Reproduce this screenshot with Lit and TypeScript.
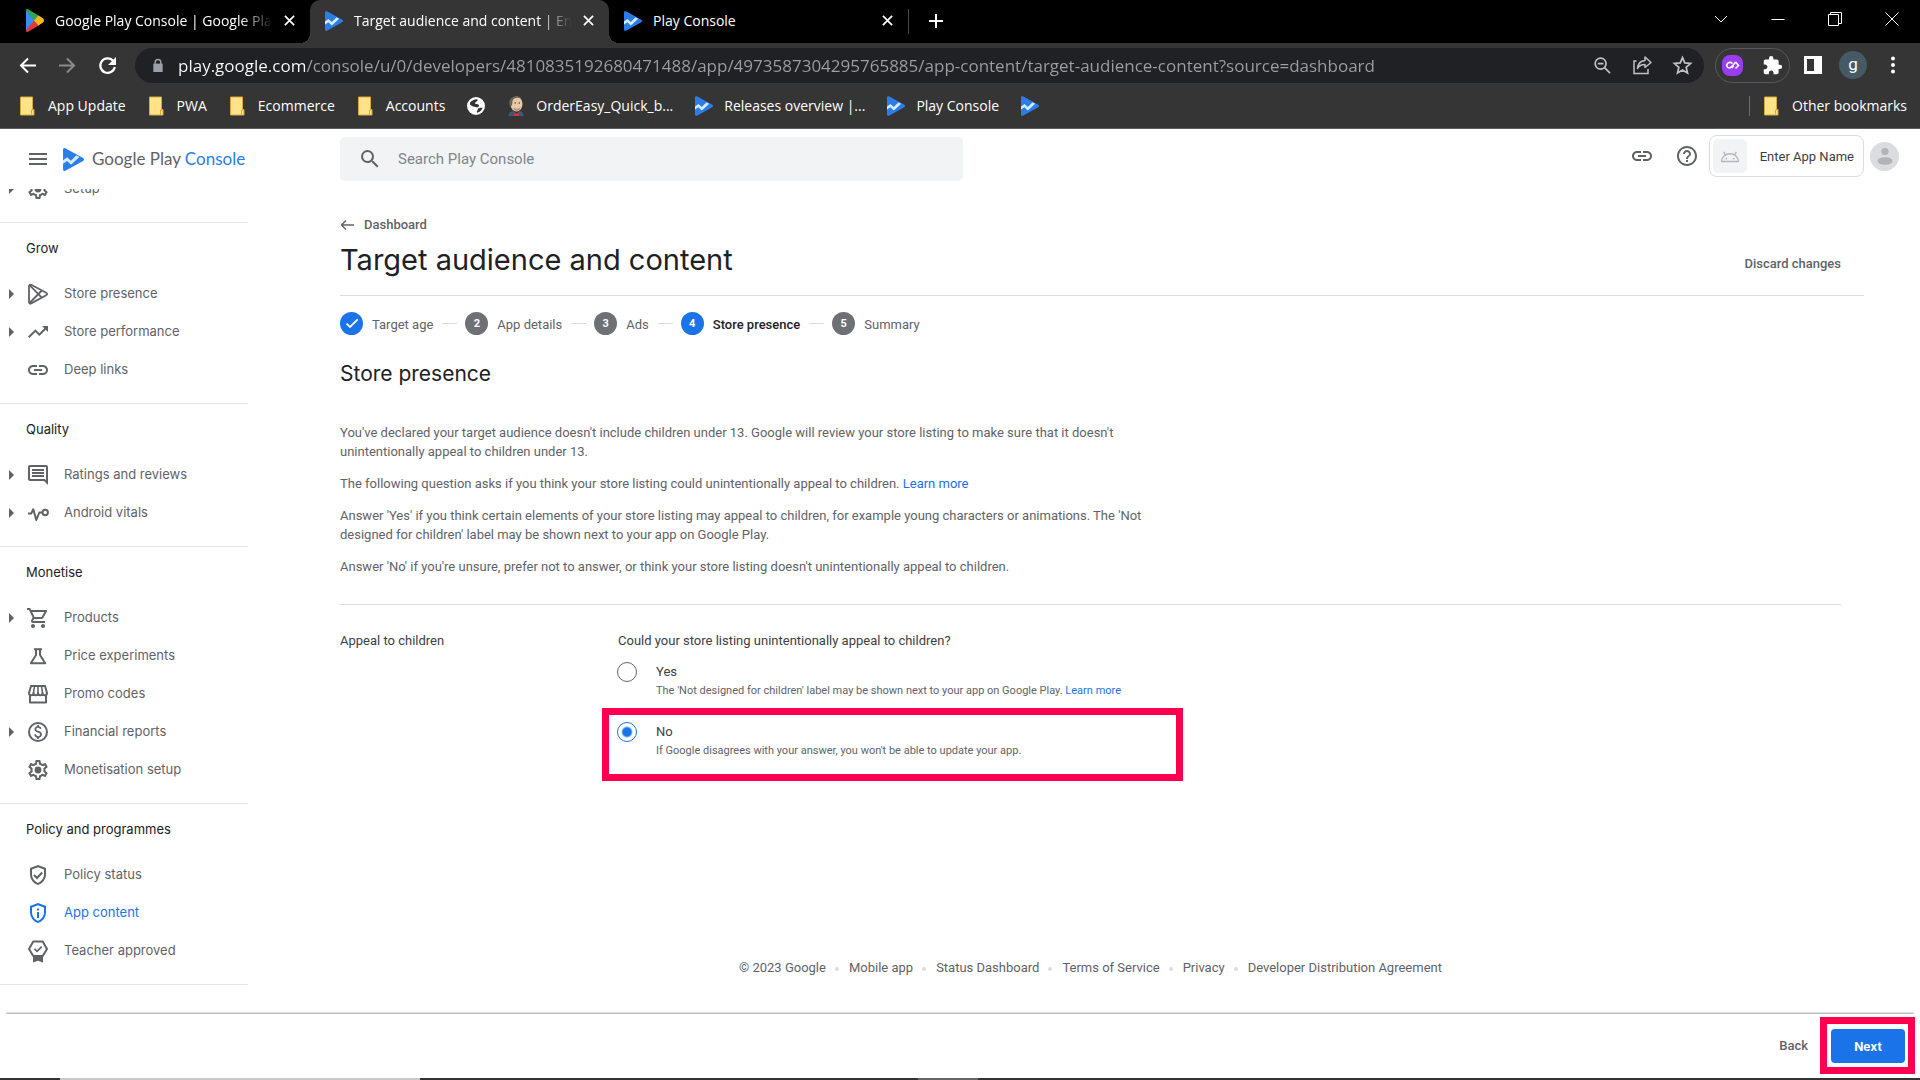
import { LitElement, html, css, svg, nothing } from "lit";
import type { TemplateResult, SVGTemplateResult } from "lit";
import { customElement, state } from "lit/decorators.js";
import { classMap } from "lit/directives/class-map.js";

/* ---------- icons ---------- */

const icon = (body: SVGTemplateResult, size = 24, box = "0 0 24 24"): TemplateResult =>
  html`<svg width=${size} height=${size} viewBox=${box} fill="currentColor" aria-hidden="true">${body}</svg>`;

const settingsPath =
  "M19.43 12.98c.04-.32.07-.64.07-.98 0-.34-.03-.66-.07-.98l2.11-1.65c.19-.15.24-.42.12-.64l-2-3.46a.5.5 0 0 0-.61-.22l-2.49 1c-.52-.4-1.08-.73-1.69-.98l-.38-2.65A.488.488 0 0 0 14 2h-4c-.25 0-.46.18-.49.42l-.38 2.65c-.61.25-1.17.59-1.69.98l-2.49-1a.566.566 0 0 0-.18-.03c-.17 0-.34.09-.43.25l-2 3.46c-.13.22-.07.49.12.64l2.11 1.65c-.04.32-.07.65-.07.98 0 .33.03.66.07.98l-2.11 1.65c-.19.15-.24.42-.12.64l2 3.46a.5.5 0 0 0 .61.22l2.49-1c.52.4 1.08.73 1.69.98l.38 2.65c.03.24.24.42.49.42h4c.25 0 .46-.18.49-.42l.38-2.65c.61-.25 1.17-.59 1.69-.98l2.49 1c.06.02.12.03.18.03.17 0 .34-.09.43-.25l2-3.46c.12-.22.07-.49-.12-.64l-2.11-1.65zm-1.98-1.71c.04.31.05.52.05.73 0 .21-.02.43-.05.73l-.14 1.13.89.7 1.08.84-.7 1.21-1.27-.51-1.04-.42-.9.68c-.43.32-.84.56-1.25.73l-1.06.43-.16 1.13-.2 1.35h-1.4l-.19-1.35-.16-1.13-1.06-.43c-.43-.18-.83-.41-1.23-.71l-.91-.7-1.06.43-1.27.51-.7-1.21 1.08-.84.89-.7-.14-1.13c-.03-.31-.05-.54-.05-.74s.02-.43.05-.73l.14-1.13-.89-.7-1.08-.84.7-1.21 1.27.51 1.04.42.9-.68c.43-.32.84-.56 1.25-.73l1.06-.43.16-1.13.2-1.35h1.39l.19 1.35.16 1.13 1.06.43c.43.18.83.41 1.23.71l.91.7 1.06-.43 1.27-.51.7 1.21-1.07.85-.89.7.14 1.13z";
const shieldPath =
  "M12 2 4 5v6.09c0 5.05 3.41 9.76 8 10.91 4.59-1.15 8-5.86 8-10.91V5l-8-3zm6 9.09c0 4-2.55 7.7-6 8.83-3.45-1.13-6-4.82-6-8.83v-4.7l6-2.25 6 2.25v4.7z";

const glyphs = {
  settings: svg`<path d=${settingsPath}/><circle cx="12" cy="12" r="3.4"/>`,
  store: svg`<g fill="none" stroke="currentColor" stroke-width="1.8" stroke-linejoin="round"><path d="M3 4.2c0-1.4 1-2 2.200-1.400l15 8c1.300.7 1.300 1.700 0 2.400l-15 8.200C4 22 3 21.400 3 20z"/><path d="M3.600 3.200 15.800 15.600M3.600 21 15.800 8.500"/></g>`,
  trend: svg`<path d="M16 6l2.290 2.290-4.880 4.880-4-4L2 16.590 3.410 18l6-6 4 4 6.300-6.290L22 12V6z"/>`,
  link: svg`<path d="M3.9 12c0-1.710 1.390-3.100 3.100-3.100h4V7H7c-2.760 0-5 2.240-5 5s2.240 5 5 5h4v-1.900H7c-1.710 0-3.100-1.390-3.100-3.100zM8 13h8v-2H8v2zm9-6h-4v1.900h4c1.710 0 3.100 1.390 3.100 3.100s-1.390 3.100-3.100 3.100h-4V17h4c2.760 0 5-2.240 5-5s-2.240-5-5-5z"/>`,
  reviews: svg`<path d="M21.990 4c0-1.100-.89-2-1.990-2H4c-1.100 0-2 .9-2 2v12c0 1.100.9 2 2 2h14l4 4-.01-18zM20 4v13.170L18.830 16H4V4h16zM6 12h12v2H6zm0-3h12v2H6zm0-3h12v2H6z"/>`,
  vitals: svg`<g fill="none" stroke="currentColor" stroke-width="2" stroke-linejoin="round"><path d="M2 12.500h3.200L7.300 8.300 10.300 19l3-7.500h2.700"/><circle cx="19.200" cy="11.500" r="2.700"/></g>`,
  cart: svg`<path d="M15.550 13c.75 0 1.410-.41 1.750-1.030l3.580-6.490A.996.996 0 0 0 20.010 4H5.210l-.94-2H1v2h2l3.600 7.590-1.350 2.440C4.520 15.370 5.480 17 7 17h12v-2H7l1.100-2h7.450zM6.160 6h12.150l-2.760 5H8.530L6.160 6zM7 18c-1.100 0-1.990.9-1.990 2S5.900 22 7 22s2-.9 2-2-.9-2-2-2zm10 0c-1.100 0-1.990.9-1.990 2s.89 2 1.990 2 2-.9 2-2-.9-2-2-2z"/>`,
  flask: svg`<g fill="none" stroke="currentColor" stroke-width="2"><path d="M8 5.200h8" /><path d="M10 5v6L4.800 19.200h14.400L14 11V5" stroke-linejoin="round"/></g>`,
  promo: svg`<g fill="none" stroke="currentColor" stroke-width="2" stroke-linejoin="round"><path d="M4 13v7.500h16V13"/><path d="M5 4h14l2 7c0 1.300-1 2.200-2.300 2.200S16.500 12.300 16.500 11c0 1.300-1 2.200-2.200 2.200S12 12.300 12 11c0 1.300-1 2.200-2.300 2.200S7.500 12.300 7.500 11c0 1.300-1 2.200-2.200 2.200S3 12.300 3 11z"/><path d="M8.400 4.500 7.500 11M12 4.500V11M15.600 4.500l.9 6.500" stroke-width="1.600"/></g>`,
  dollar: svg`<circle cx="12" cy="12" r="9" fill="none" stroke="currentColor" stroke-width="2"/><path d="M12.890 11.100c-1.780-.59-2.640-.96-2.640-1.900 0-1.020 1.110-1.390 1.810-1.390 1.310 0 1.790.99 1.900 1.340l1.580-.67c-.15-.44-.82-1.910-2.660-2.230V5h-1.750v1.260c-2.600.56-2.620 2.850-2.620 2.960 0 2.270 2.250 2.910 3.350 3.310 1.580.56 2.280 1.070 2.280 2.030 0 1.130-1.050 1.610-1.980 1.610-1.820 0-2.340-1.870-2.400-2.090l-1.660.67c.63 2.190 2.280 2.780 3.020 2.960V19h1.750v-1.240c.52-.09 3.020-.59 3.020-3.220.01-1.390-.6-2.610-3-3.440z"/>`,
  shieldCheck: svg`<path d=${shieldPath}/><path d="m8 12 3 3 5.200-5.500" fill="none" stroke="currentColor" stroke-width="2"/>`,
  shieldInfo: svg`<path d=${shieldPath}/><path d="M11 11h2v6h-2zM11 7.500h2v2h-2z"/>`,
  badge: svg`<path d="M7.300 2.500h9.400L21 10l-4.300 7H7.300L3 10z" fill="none" stroke="currentColor" stroke-width="2" stroke-linejoin="round"/><path d="m8.500 9.800 2.600 2.600 4.600-4.800" fill="none" stroke="currentColor" stroke-width="1.700"/><path d="M7 17h10v6.500l-5-1.800-5 1.800z"/>`,
  help: svg`<path d="M11 18h2v-2h-2v2zm1-16C6.480 2 2 6.480 2 12s4.480 10 10 10 10-4.480 10-10S17.520 2 12 2zm0 18c-4.410 0-8-3.590-8-8s3.590-8 8-8 8 3.590 8 8-3.590 8-8 8zm0-14c-2.210 0-4 1.790-4 4h2c0-1.100.9-2 2-2s2 .9 2 2c0 2-3 1.750-3 5h2c0-2.250 3-2.500 3-5 0-2.210-1.790-4-4-4z"/>`,
  search: svg`<path d="M15.500 14h-.79l-.28-.27A6.470 6.470 0 0 0 16 9.500 6.500 6.500 0 1 0 9.500 16c1.610 0 3.090-.59 4.230-1.570l.27.280v.79l5 4.990L20.490 19l-4.990-5zm-6 0C7.010 14 5 11.990 5 9.500S7.010 5 9.500 5 14 7.010 14 9.500 11.990 14 9.500 14z"/>`,
  puzzle: svg`<path d="M20.500 11H19V7c0-1.100-.9-2-2-2h-4V3.500a2.500 2.500 0 0 0-5 0V5H4c-1.100 0-1.990.9-1.990 2v3.800H3.500c1.490 0 2.700 1.210 2.700 2.700s-1.210 2.700-2.700 2.700H2V20c0 1.100.9 2 2 2h3.800v-1.500c0-1.490 1.210-2.700 2.700-2.700s2.700 1.210 2.700 2.700V22H17c1.100 0 2-.9 2-2v-4h1.500a2.500 2.500 0 0 0 0-5z"/>`,
  menu: svg`<path d="M3 6h18v2H3zM3 11h18v2H3zM3 16h18v2H3z"/>`,
  android: svg`<g fill="none" stroke="currentColor" stroke-width="1.500"><path d="M2.800 18a9.200 8.500 0 0 1 18.400 0z" stroke-linejoin="round"/><path d="M5 7.500l2.300 3.700M19 7.500l-2.300 3.700"/></g><circle cx="8" cy="14.800" r="1"/><circle cx="16" cy="14.800" r="1"/>`,
  person: svg`<circle cx="12" cy="7.500" r="3.600"/><ellipse cx="12" cy="17" rx="7.500" ry="3.800"/>`,
};

const playBlue = (w: number, h: number) => html`
  <svg width=${w} height=${h} viewBox="0 0 20 22" aria-hidden="true">
    <path d="M0 1.500C0 .3 1.100-.3 2.200.3l17 9.300c1.100.6 1.100 2.200 0 2.800l-17 9.300C1.100 22.300 0 21.700 0 20.500z" fill="#2b7de9"/>
    <path d="M0 11.600 3.900 8.800l3.600 3.400 5.200-5.200-1.300-.8 4.300 2.300-8.100 7.600-3.800-3.600L0 15z" fill="#d6ecff"/>
  </svg>`;

const playColor = html`
  <svg width="18" height="23" viewBox="0 0 18 23" aria-hidden="true">
    <path d="M0 1 0 22 9 11.500z" fill="#3b8df5"/>
    <path d="M.3.3C1-.2 1.800.1 2.500.5L13 6.800 8.500 12 0 1.500z" fill="#2fa653"/>
    <path d="M.3 22.700c.7.500 1.500.2 2.200-.2L13 16.300 8.500 11 0 21.500z" fill="#e4392c"/>
    <path d="M12.500 6.500 17 9.300c1.300.9 1.300 3.400 0 4.300l-4.500 3L8 11.500z" fill="#f6b91b"/>
  </svg>`;

const folder = html`
  <svg width="18" height="20" viewBox="0 0 18 20" aria-hidden="true">
    <path d="M1.500 1h12v12.500H15V19H1.500z" fill="#ffe38a" stroke="#d9a93a"/>
    <path d="M12.500 18.500V14H15" fill="none" stroke="#d9a93a"/>
  </svg>`;

const globe = html`
  <svg width="18" height="18" viewBox="0 0 18 18" aria-hidden="true">
    <circle cx="9" cy="9" r="9" fill="#fff"/>
    <path d="M4 4.500C6 3.200 8.500 1.800 10.500 2.500 11.300 4 8.500 4.800 8 6c0 1.200 2.500.8 4 2 .4 1.800-1.500 2.600-2.800 2.200C8 9.500 6.500 10.200 5 9 3 8 2 6.500 4 4.500z" fill="#353535"/>
    <path d="M11 12c1.500-1.700 4.500-1 4.500-1-.7 2.300-2.500 4-5.300 4.800-1-.9 0-2 .8-3.800z" fill="#353535"/>
  </svg>`;

const face = html`
  <svg width="18" height="20" viewBox="0 0 18 20" aria-hidden="true">
    <ellipse cx="9.500" cy="8" rx="6" ry="7.500" fill="#e8c9a6"/>
    <path d="M2.500 9.500C1 4 5 0 9.500.3c3 .2 4 1.200 5 2.200-4-1.500-7-1-8.500 1.300C5 5.500 5.800 8 4.500 10z" fill="#6d6458"/>
    <path d="M6.500 11.500c2 1.800 5 1.600 6.500 0l-.5 2.500c-1.500 1-4 1-5.500 0z" fill="#b98f6c"/>
    <path d="M7.500 7h1.500M11.500 7H13" stroke="#333" stroke-width="1.200"/>
    <path d="M1.500 20c0-3 2-4.500 5-5l3 2.500 3-2.500c2.500.5 4 2 4 5z" fill="#3c5a78"/>
    <path d="M7 17.500h5V20H7z" fill="#d33"/>
  </svg>`;

/* ---------- data ---------- */

type NavItem = { label: string; glyph: SVGTemplateResult; expand?: boolean; active?: boolean };
type NavGroup = { title: string; items: NavItem[] };

const groups: NavGroup[] = [
  {
    title: "Grow",
    items: [
      { label: "Store presence", glyph: glyphs.store, expand: true },
      { label: "Store performance", glyph: glyphs.trend, expand: true },
      { label: "Deep links", glyph: glyphs.link },
    ],
  },
  {
    title: "Quality",
    items: [
      { label: "Ratings and reviews", glyph: glyphs.reviews, expand: true },
      { label: "Android vitals", glyph: glyphs.vitals, expand: true },
    ],
  },
  {
    title: "Monetise",
    items: [
      { label: "Products", glyph: glyphs.cart, expand: true },
      { label: "Price experiments", glyph: glyphs.flask },
      { label: "Promo codes", glyph: glyphs.promo },
      { label: "Financial reports", glyph: glyphs.dollar, expand: true },
      { label: "Monetisation setup", glyph: glyphs.settings },
    ],
  },
  {
    title: "Policy and programmes",
    items: [
      { label: "Policy status", glyph: glyphs.shieldCheck },
      { label: "App content", glyph: glyphs.shieldInfo, active: true },
      { label: "Teacher approved", glyph: glyphs.badge },
    ],
  },
];

/* ---------- browser frame ---------- */

@customElement("browser-frame")
export class BrowserFrame extends LitElement {
  static styles = css`
    :host { display: block; font-family: "Open Sans", "Noto Sans", sans-serif; color: #fff; background: #353535; border-bottom: 1px solid #606060; }
    button { background: none; border: 0; padding: 0; margin: 0; color: inherit; font: inherit; display: flex; align-items: center; justify-content: center; }
    a { color: inherit; text-decoration: none; }
    .tabs { display: flex; height: 43px; background: #000; padding-left: 11px; }
    .tab { display: flex; align-items: center; width: 299px; height: 43px; padding: 0 12px 2px 15px; box-sizing: border-box; font-size: 14px; }
    .tab.active { background: #353535; border-radius: 10px 10px 0 0; position: relative; }
    .tab.active::before, .tab.active::after { content: ""; position: absolute; bottom: 0; width: 10px; height: 10px; }
    .tab.active::before { left: -10px; background: radial-gradient(circle at 0 0, transparent 10px, #353535 10px); }
    .tab.active::after { right: -10px; background: radial-gradient(circle at 100% 0, transparent 10px, #353535 10px); }
    .tab svg { flex: none; }
    .tab-title { flex: 1; margin: 0 8px 0 11px; overflow: hidden; white-space: nowrap; line-height: 20px; }
    .tab-title.fade { -webkit-mask-image: linear-gradient(90deg, #000 85%, transparent); mask-image: linear-gradient(90deg, #000 85%, transparent); }
    .tab button { width: 17px; height: 17px; }
    .divider { width: 1px; height: 25px; margin-top: 9px; background: #4a4a4a; }
    .new-tab { width: 54px; height: 42px; }
    .window { display: flex; margin-left: auto; padding-bottom: 6px; }
    .window button { width: 57px; height: 37px; }
    .bar { display: flex; align-items: center; height: 44px; padding: 0 7px; }
    .bar > button { width: 40px; height: 36px; }
    .dim { color: #8b8b8b; }
    .omni { flex: 1; display: flex; align-items: center; height: 35px; margin: 0 11px 0 8px; border-radius: 18px; background: #202124; padding: 0 2px 0 16px; color: #bdc1c6; }
    .omni > svg { color: #9aa0a6; }
    .omni input { flex: 1; border: 0; outline: 0; margin: 0 0 0 13px; padding: 0; height: 26px; font: inherit; font-size: 17px; color: transparent; background: linear-gradient(90deg, #fff 127px, #9aa0a6 127px); -webkit-background-clip: text; background-clip: text; }
    .omni button { width: 40px; height: 35px; }
    .ext { display: flex; align-items: center; gap: 19px; height: 33px; padding: 0 6px; border: 1px solid #55585c; border-radius: 18px; margin-right: 3px; }
    .profile { width: 28px; height: 28px; border-radius: 50%; background: #455a64; display: flex; align-items: center; justify-content: center; font-family: Roboto, sans-serif; font-size: 17px; line-height: 20px; padding-bottom: 2px; box-sizing: border-box; }
    .marks { display: flex; align-items: center; gap: 22px; height: 41px; padding: 0 13px 3px 19px; box-sizing: border-box; font-size: 14px; line-height: 20px; }
    .mark { display: flex; align-items: center; gap: 11px; white-space: nowrap; }
    .other { margin-left: auto; border-left: 1px solid #6b6b6b; padding-left: 13px; height: 20px; }
  `;

  private cross(size = 11) {
    return icon(svg`<path d="M1 1l10 10M11 1L1 11" stroke="currentColor" stroke-width="1.900" fill="none"/>`, size, "0 0 12 12");
  }

  private tab(fav: TemplateResult, title: string, active = false, fade = false) {
    return html`<div class=${classMap({ tab: true, active })}>
      ${fav}<span class=${classMap({ "tab-title": true, fade })}>${title}</span>
      <button aria-label="Close tab">${this.cross()}</button>
    </div>`;
  }

  private mark(pic: TemplateResult, label = "", name = "") {
    return html`<a class="mark" href="#" aria-label=${label || name}>${pic}${label ? html`<span>${label}</span>` : nothing}</a>`;
  }

  render() {
    const fav = playBlue(18, 22);
    return html`
      <div class="tabs">
        ${this.tab(playColor, "Google Play Console | Google Play", false, true)}
        ${this.tab(fav, "Target audience and content | Enter", true, true)}
        ${this.tab(fav, "Play Console")}
        <span class="divider"></span>
        <button class="new-tab" aria-label="New tab">${icon(svg`<path d="M8 1v14M1 8h14" stroke="currentColor" stroke-width="2"/>`, 16, "0 0 16 16")}</button>
        <div class="window">
          <button aria-label="Search tabs">${icon(svg`<path d="M1 4l6 6 6-6" fill="none" stroke="currentColor"/>`, 14, "0 0 14 14")}</button>
          <button aria-label="Minimise">${icon(svg`<path d="M.500 7.500h13" stroke="currentColor"/>`, 14, "0 0 14 14")}</button>
          <button aria-label="Restore">${icon(svg`<path d="M.500 2.500h10v11h-10zM2.500 2V.500h11v11h-2.500" fill="none" stroke="currentColor"/>`, 14, "0 0 14 14")}</button>
          <button aria-label="Close">${icon(svg`<path d="M.500.500l13 13M13.500.500l-13 13" fill="none" stroke="currentColor"/>`, 14, "0 0 14 14")}</button>
        </div>
      </div>
      <div class="bar">
        <button aria-label="Back">${icon(svg`<path d="M17 8.500H2M9 1.500l-7 7 7 7" fill="none" stroke="currentColor" stroke-width="2"/>`, 17, "0 0 17 17")}</button>
        <button class="dim" aria-label="Forward">${icon(svg`<path d="M0 8.500h15M8 1.500l7 7-7 7" fill="none" stroke="currentColor" stroke-width="2"/>`, 17, "0 0 17 17")}</button>
        <button aria-label="Reload">${icon(svg`<path d="M15.300 5A7.300 7.300 0 1 0 16.800 11" fill="none" stroke="currentColor" stroke-width="2.200"/><path d="M18 1v8h-8z"/>`, 19, "0 0 19 19")}</button>
        <div class="omni">
          ${icon(svg`<path d="M1 6h10v9H1z"/><path d="M3 7V4.500a3 3 0 0 1 6 0V7" fill="none" stroke="currentColor" stroke-width="1.600"/>`, 14, "0 0 12 15")}
          <input aria-label="Address" .value=${"play.google.com/console/u/0/developers/4810835192680471488/app/4973587304295765885/app-content/target-audience-content?source=dashboard"} />
          <button aria-label="Zoom">${icon(svg`<circle cx="7" cy="7" r="5.800" fill="none" stroke="currentColor" stroke-width="1.800"/><path d="M4 7h6M11.200 11.200 17 17" stroke="currentColor" stroke-width="1.800"/>`, 17, "0 0 18 18")}</button>
          <button aria-label="Share">${icon(svg`<path d="M3.500 5H1v12.500h14V13" fill="none" stroke="currentColor" stroke-width="1.500"/><path d="M12 1l6 5.500-6 5V8.500c-3.500 0-6 1-7.500 4 .3-4.500 3-7.500 7.500-8z" fill="none" stroke="currentColor" stroke-width="1.500" stroke-linejoin="round"/>`, 19, "0 0 19 19")}</button>
          <button aria-label="Bookmark">${icon(svg`<path d="M12 3l2.600 6.100 6.600.6-5 4.400 1.500 6.500L12 17.200l-5.700 3.400 1.500-6.500-5-4.400 6.600-.6z" fill="none" stroke="currentColor" stroke-width="2"/>`, 21)}</button>
        </div>
        <div class="ext">
          <button aria-label="Extension">${icon(svg`<rect width="21" height="21" rx="8" fill="#9a3df0"/><path d="M10.500 8.500C9 7 6.500 7 5.200 8.700c-1.300 2 .2 4.300 2.300 4.300 1.500 0 2.300-1.200 3.300-2.600L13.500 7M9.800 13l1.800-2.400M13.500 7l3 3.500-3 3" fill="none" stroke="#fff" stroke-width="1.600"/>`, 21, "0 0 21 21")}</button>
          <button aria-label="Extensions">${icon(glyphs.puzzle, 21)}</button>
        </div>
        <button aria-label="Side panel">${icon(svg`<path d="M0 0h18v18H0zM3 3v12h7V3z" fill-rule="evenodd"/>`, 18, "0 0 18 18")}</button>
        <button aria-label="Profile"><span class="profile">g</span></button>
        <button aria-label="Menu">${icon(svg`<circle cx="9" cy="2.500" r="2"/><circle cx="9" cy="9" r="2"/><circle cx="9" cy="15.500" r="2"/>`, 18, "0 0 18 18")}</button>
      </div>
      <div class="marks">
        ${this.mark(folder, "App Update")} ${this.mark(folder, "PWA")} ${this.mark(folder, "Ecommerce")}
        ${this.mark(folder, "Accounts")} ${this.mark(globe, "", "Website")} ${this.mark(face, "OrderEasy_Quick_b...")}
        ${this.mark(fav, "Releases overview |...")} ${this.mark(fav, "Play Console")} ${this.mark(fav, "", "Console home")}
        <a class="mark other" href="#">${folder}<span>Other bookmarks</span></a>
      </div>
    `;
  }
}

/* ---------- side navigation ---------- */

@customElement("side-nav")
export class SideNav extends LitElement {
  static styles = css`
    :host { display: block; overflow: hidden; font-family: Inter, Roboto, sans-serif; font-size: 13px; color: #5f6368; }
    ul { list-style: none; margin: 0; padding: 0 0 14px; border-bottom: 1px solid #e4e5e7; }
    .scrolled { margin-top: -19px; }
    h2 { margin: 0; height: 52px; box-sizing: border-box; padding: 15px 0 0 26px; font-size: 13px; font-weight: 400; line-height: 20px; color: #202124; }
    a { display: flex; align-items: center; height: 38px; padding-left: 9px; color: inherit; text-decoration: none; }
    .active { color: #1a73e8; }
    .arrow { width: 5px; height: 10px; margin-right: 12px; background: transparent; }
    .arrow.shown { background: currentColor; clip-path: polygon(0 0, 100% 50%, 0 100%); }
    a svg { flex: none; }
    .label { margin-left: 14px; line-height: 20px; padding-bottom: 3px; }
  `;

  private row(item: NavItem) {
    return html`<li>
      <a href="#" class=${classMap({ active: !!item.active })}>
        <span class=${classMap({ arrow: true, shown: !!item.expand })}></span>${icon(item.glyph)}<span class="label">${item.label}</span>
      </a>
    </li>`;
  }

  render() {
    return html`<nav>
      <ul class="scrolled">${this.row({ label: "Setup", glyph: glyphs.settings, expand: true })}</ul>
      ${groups.map((g) => html`<h2>${g.title}</h2><ul>${g.items.map((i) => this.row(i))}</ul>`)}
    </nav>`;
  }
}

/* ---------- page ---------- */

@customElement("app-root")
export class AppRoot extends LitElement {
  @state() private answer = "no";

  static styles = css`
    :host { display: flex; flex-direction: column; min-height: 100vh; background: #fff; font-family: Roboto, sans-serif; font-size: 13px; line-height: 19px; color: #5f6368; }
    button { background: none; border: 0; padding: 0; margin: 0; color: inherit; font: inherit; }
    a { color: inherit; text-decoration: none; }
    .blue { color: #1a73e8; }
    .top { display: flex; align-items: center; height: 60px; padding-right: 21px; }
    .brand { display: flex; align-items: center; width: 340px; padding-left: 26px; box-sizing: border-box; }
    .brand button { display: flex; margin-right: 13px; }
    .wordmark { margin-left: 8px; font-family: Lato, Roboto, sans-serif; font-size: 17px; line-height: 24px; color: #5f6368; }
    .wordmark b { font-weight: 400; color: #2b7de9; }
    .search { display: flex; align-items: center; width: 623px; height: 44px; border-radius: 5px; background: #f1f3f4; padding-left: 18px; box-sizing: border-box; }
    .search input { flex: 1; margin-left: 16px; border: 0; outline: 0; background: none; padding: 0; font: inherit; font-size: 15px; color: #202124; }
    .search input::placeholder { color: #80868b; opacity: 1; }
    .tools { display: flex; align-items: center; margin-left: auto; padding-bottom: 6px; }
    .tools > button { display: flex; }
    .tools .help { margin: 0 10px 0 21px; }
    .tools .app { align-items: center; height: 42px; border: 1px solid #dadce0; border-radius: 8px; padding: 0 9px 0 3px; box-sizing: border-box; gap: 13px; color: #3c4043; }
    .thumb { display: flex; width: 34px; height: 34px; align-items: center; justify-content: center; background: #f1f3f4; border-radius: 5px; color: #b4b8bc; }
    .tools .me { width: 29px; height: 29px; border-radius: 50%; background: #dadce0; color: #b0b3b7; margin-left: 6px; align-items: center; justify-content: center; }
    .body { flex: 1; display: grid; grid-template-columns: 248px 1fr; }
    main { display: flex; flex-direction: column; padding: 25px 56px 36px 92px; }
    .back { display: flex; align-items: center; gap: 10px; line-height: 22px; font-weight: 500; align-self: flex-start; }
    .title { display: flex; align-items: center; justify-content: space-between; margin-top: 4px; padding: 0 23px 15px 0; border-bottom: 1px solid #dadce0; }
    h1 { margin: 0; font-family: Inter, Roboto, sans-serif; font-size: 29px; font-weight: 400; line-height: 40px; color: #202124; }
    .title button, .back-btn { font-weight: 500; line-height: 20px; }
    .title button { padding-top: 8px; }
    .steps { display: flex; align-items: center; list-style: none; margin: 15px 0 25px; padding: 0; height: 24px; }
    .steps li { display: flex; align-items: center; }
    .steps li + li::before { content: ""; width: 15px; height: 1px; margin: 0 8px 0 9px; background: #dadce0; }
    .step-name { padding-top: 2px; }
    .dot { display: flex; align-items: center; justify-content: center; width: 23px; height: 23px; border-radius: 50%; background: #6d7176; color: #fff; font-size: 11px; font-weight: 700; margin-right: 9px; }
    .dot.on { background: #1a73e8; }
    .current { color: #202124; font-weight: 500; }
    h2 { margin: 0 0 35px; font-family: Inter, Roboto, sans-serif; font-size: 21px; font-weight: 400; line-height: 28px; color: #202124; }
    .copy { max-width: 850px; }
    p { margin: 0 0 13px; }
    fieldset { display: grid; grid-template-columns: 278px 1fr; border: 0; border-top: 1px solid #dadce0; margin: 28px 23px 0 0; padding: 26px 0 0; min-width: 0; color: #3c4043; }
    .copy p:last-child { margin: 0; }
    .field-name { line-height: 20px; }
    .question { line-height: 20px; margin-bottom: 11px; }
    .option { display: flex; gap: 19px; position: relative; }
    .option + .option { margin-top: 22px; }
    .option input { appearance: none; flex: none; width: 20px; height: 20px; margin: 0 0 0 -1px; border: 1px solid #5f6368; border-radius: 50%; background: #fff; }
    .option input:checked { border-color: #1a73e8; background: radial-gradient(circle, #1a73e8 4px, #fff 6px); }
    .hint { font-size: 11px; color: #5f6368; }
    .option label { display: block; }
    .marker { position: absolute; border: 7px solid #ff0050; box-sizing: border-box; pointer-events: none; }
    .around-option { left: -16px; width: 581px; top: -14px; bottom: -21px; }
    footer { display: flex; justify-content: center; margin: auto 23px 0 0; line-height: 20px; }
    footer a::before { content: ""; display: inline-block; width: 4px; height: 4px; border-radius: 50%; background: #dadce0; margin: 0 10px 0 9px; vertical-align: middle; }
    .actions { display: flex; align-items: center; justify-content: flex-end; gap: 23px; height: 64px; margin: 0 4px; padding-right: 11px; background: #fff; box-shadow: 0 -3px 2px -2px rgba(60, 64, 67, 0.5); }
    .cta { position: relative; }
    .next { display: block; width: 74px; height: 34px; border-radius: 4px; background: #1a73e8; color: #fff; font-weight: 700; font-family: Inter, Roboto, sans-serif; font-size: 12px; }
    .around-next { inset: -12px -10px -11px -11px; }
    .taskbar { display: flex; height: 2px; background: #333; }
    .run { width: 360px; margin-left: 60px; background: #c8c8c8; }
    .run.second { width: 60px; margin-left: 498px; background: #666; }
  `;

  private step(n: string, label: string, cls: { on?: boolean; current?: boolean } = {}) {
    const mark = n === "1" ? icon(svg`<path d="M9 16.200 4.800 12l-1.900 1.900L9 20 21.500 7.500l-1.900-1.900z"/>`, 16) : n;
    return html`<li aria-current=${cls.current ? "step" : "false"}>
      <span class=${classMap({ dot: true, on: !!cls.on })}>${mark}</span><span class=${classMap({ "step-name": true, current: !!cls.current })}>${label}</span>
    </li>`;
  }

  private option(value: string, label: string, hint: unknown, marked = false) {
    return html`<div class="option">
      <input type="radio" name="appeal" id=${"appeal-" + value} .checked=${this.answer === value} @change=${() => (this.answer = value)} />
      <div>
        <label for=${"appeal-" + value}>${label}</label>
        <div class="hint">${hint}</div>
      </div>
      ${marked ? html`<span class="marker around-option"></span>` : nothing}
    </div>`;
  }

  render() {
    return html`
      <browser-frame></browser-frame>
      <header class="top">
        <div class="brand">
          <button aria-label="Menu">${icon(glyphs.menu)}</button>
          ${playBlue(21, 23)}
          <span class="wordmark">Google Play <b>Console</b></span>
        </div>
        <div class="search">${icon(glyphs.search)}<input type="search" aria-label="Search Play Console" placeholder="Search Play Console" /></div>
        <div class="tools">
          <button aria-label="Copy link">${icon(glyphs.link)}</button>
          <button class="help" aria-label="Help">${icon(glyphs.help)}</button>
          <button class="app"><span class="thumb">${icon(glyphs.android, 22)}</span>Enter App Name</button>
          <button class="me" aria-label="Account">${icon(glyphs.person)}</button>
        </div>
      </header>
      <div class="body">
        <side-nav></side-nav>
        <main>
          <a class="back" href="#">${icon(svg`<path d="M14 6H1.500M6 1.500 1.500 6 6 10.500" fill="none" stroke="currentColor" stroke-width="1.500"/>`, 14, "0 0 14 12")}Dashboard</a>
          <div class="title"><h1>Target audience and content</h1><button>Discard changes</button></div>
          <ol class="steps">
            ${this.step("1", "Target age", { on: true })} ${this.step("2", "App details")} ${this.step("3", "Ads")}
            ${this.step("4", "Store presence", { on: true, current: true })} ${this.step("5", "Summary")}
          </ol>
          <h2>Store presence</h2>
          <div class="copy">
            <p>You've declared your target audience doesn't include children under 13. Google will review your store listing to make sure that it doesn't unintentionally appeal to children under 13.</p>
            <p>The following question asks if you think your store listing could unintentionally appeal to children. <a class="blue" href="#">Learn more</a></p>
            <p>Answer 'Yes' if you think certain elements of your store listing may appeal to children, for example young characters or animations. The 'Not designed for children' label may be shown next to your app on Google Play.</p>
            <p>Answer 'No' if you're unsure, prefer not to answer, or think your store listing doesn't unintentionally appeal to children.</p>
          </div>
          <fieldset>
            <div class="field-name">Appeal to children</div>
            <div role="radiogroup" aria-labelledby="question">
              <div class="question" id="question">Could your store listing unintentionally appeal to children?</div>
              ${this.option("yes", "Yes", html`The 'Not designed for children' label may be shown next to your app on Google Play. <a class="blue" href="#">Learn more</a>`)}
              ${this.option("no", "No", "If Google disagrees with your answer, you won't be able to update your app.", true)}
            </div>
          </fieldset>
          <footer>
            <span>© 2023 Google</span><a href="#">Mobile app</a><a href="#">Status Dashboard</a><a href="#">Terms of Service</a><a href="#">Privacy</a><a href="#">Developer Distribution Agreement</a>
          </footer>
        </main>
      </div>
      <div class="actions">
        <button class="back-btn">Back</button>
        <div class="cta"><button class="next">Next</button><span class="marker around-next"></span></div>
      </div>
      <div class="taskbar"><span class="run"></span><span class="run second"></span></div>
    `;
  }
}
